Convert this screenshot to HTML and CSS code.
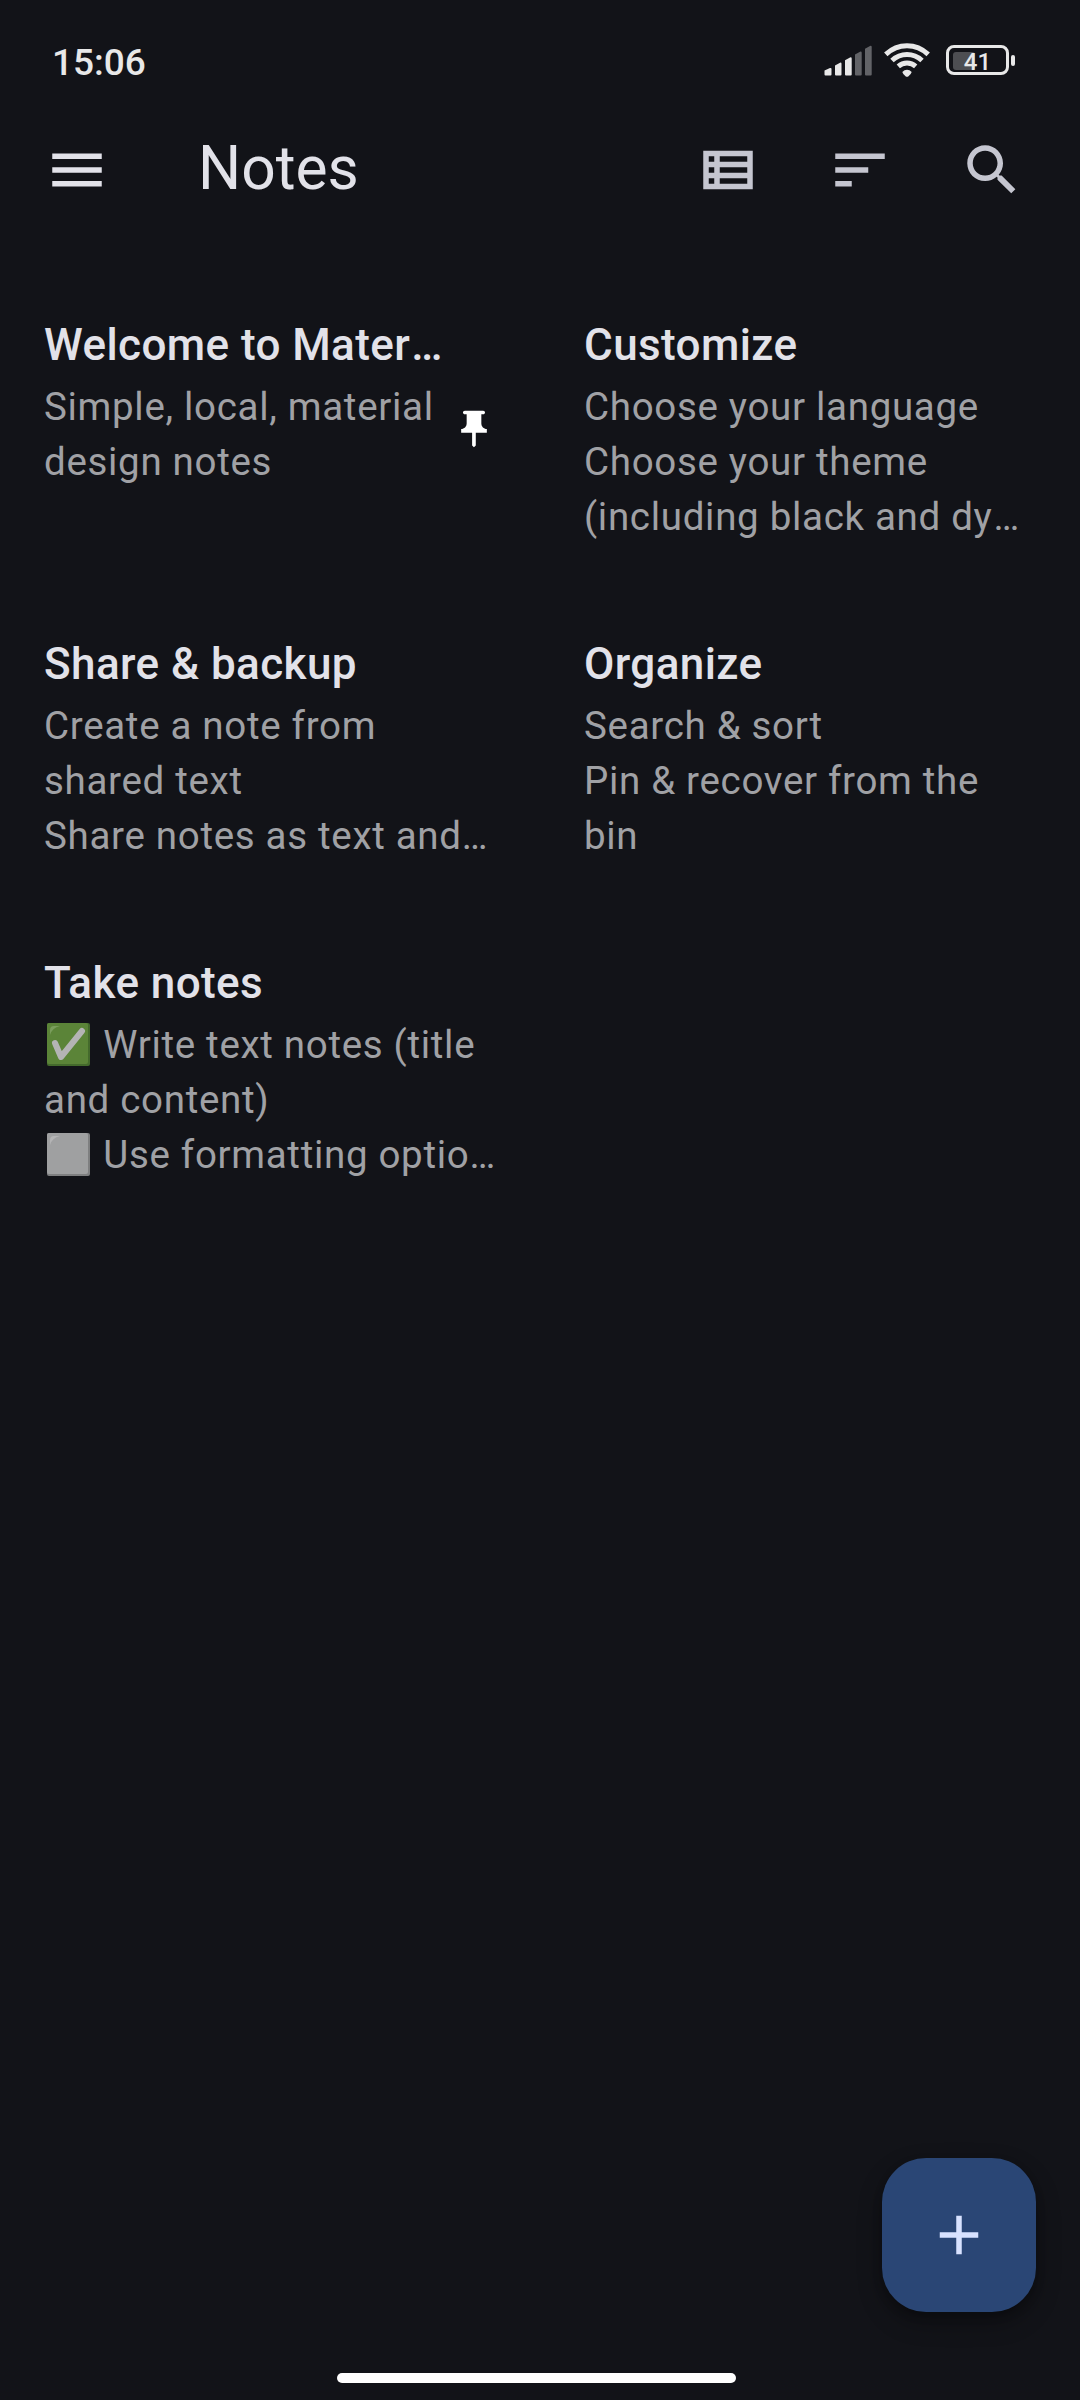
FILE: index.html
```html
<!DOCTYPE html>
<html lang="en">
<head>
<meta charset="utf-8">
<title>Notes</title>
<link rel="stylesheet" href="styles.css">
</head>
<body>
<div class="screen">
  <div class="status">
    <span class="clock">15:06</span>
    <div class="indicators">
      <svg class="signal" width="48" height="32" viewBox="0 0 48 32">
        <path class="lit" d="M.5 26.5 6 24q1.5-.5 1.500 1v5.500q0 1-1 1h-5q-1 0-1-1zM11 21.500l5-2.800q1.500-.5 1.500 1v10.800q0 1-1 1H12q-1 0-1-1zM21 16.200l5-2.800q1.700-.5 1.700 1v16.100q0 1-1 1H22q-1 0-1-1z"/>
        <path class="dim" d="M31 10.500l5-2.800q1.700-.5 1.700 1v21.800q0 1-1 1H32q-1 0-1-1zM41 4.700l5-2.800q1.700-.5 1.700 1v27.600q0 1-1 1H42q-1 0-1-1z"/>
      </svg>
      <svg class="wifi" width="46" height="34" viewBox="0 0 46 34">
        <path class="arc" d="M1.800 11.300Q11 2.700 23 2.700t21.200 8.600M8 17.500q6.500-6 15-6t15 6M14.300 23.300q3.700-3.200 8.700-3.200t8.700 3.200"/>
        <path class="lit" d="M18.300 29q2-2.300 4.700-2.300t4.700 2.300q-.5 2-3.200 4.200-1.500 1-3 0Q18.800 31 18.300 29z"/>
      </svg>
      <div class="battery"><div class="level"></div><span class="percent">41</span></div>
      <div class="terminal"></div>
    </div>
  </div>

  <header class="bar">
    <svg class="icon menu" viewBox="0 0 24 24"><path d="M3 18h18v-2H3v2zm0-5h18v-2H3v2zm0-7v2h18V6H3z"/></svg>
    <h1 class="heading">Notes</h1>
    <div class="actions">
      <svg class="icon" viewBox="0 0 24 24"><path d="M3 5v14h18V5H3zm4 2v2H5V7h2zm-2 6v-2h2v2H5zm0 2h2v2H5v-2zm14 2H9v-2h10v2zm0-4H9v-2h10v2zm0-4H9V7h10v2z"/></svg>
      <svg class="icon" viewBox="0 0 24 24"><path d="M3 18h6v-2H3v2zM3 6v2h18V6H3zm0 7h12v-2H3v2z"/></svg>
      <svg class="icon" viewBox="0 0 24 24"><path d="M15.500 14h-.79l-.28-.27C15.410 12.590 16 11.110 16 9.500 16 5.910 13.090 3 9.500 3S3 5.910 3 9.500 5.910 16 9.500 16c1.610 0 3.090-.59 4.230-1.570l.27.28v.79l5 4.990L20.490 19l-4.990-5zm-6 0C7.010 14 5 11.990 5 9.500S7.010 5 9.500 5 14 7.010 14 9.500 11.990 14 9.500 14z"/></svg>
    </div>
  </header>

  <main class="grid">
    <article class="note">
      <div class="text">
        <h2 class="title">Welcome to Mater<span class="more">…</span></h2>
        <p class="body">Simple, local, material<br>design notes</p>
      </div>
      <svg class="pin" viewBox="0 0 24 24"><path d="M16 9V4h1c.55 0 1-.45 1-1s-.45-1-1-1H7c-.55 0-1 .45-1 1s.45 1 1 1h1v5c0 1.660-1.340 3-3 3v2h5.970v7l1 1 1-1v-7H19v-2c-1.660 0-3-1.340-3-3z"/></svg>
    </article>
    <article class="note">
      <div class="text">
        <h2 class="title">Customize</h2>
        <p class="body">Choose your language<br>Choose your theme<br>(including black and dy<span class="more">…</span></p>
      </div>
    </article>
    <article class="note">
      <div class="text">
        <h2 class="title">Share &amp; backup</h2>
        <p class="body">Create a note from<br>shared text<br>Share notes as text and…</p>
      </div>
    </article>
    <article class="note">
      <div class="text">
        <h2 class="title">Organize</h2>
        <p class="body">Search &amp; sort<br>Pin &amp; recover from the<br>bin</p>
      </div>
    </article>
    <article class="note">
      <div class="text">
        <h2 class="title">Take notes</h2>
        <p class="body"><svg class="box" viewBox="0 0 43 43"><rect width="43" height="43" rx="2" fill="#446a2c"/><rect width="41" height="41" rx="2" fill="#5b8438"/><path d="M3 12V7q0-4 4-4h6Q5 5 3 12z" fill="#7a9d5c"/><path d="M8 20l6 14L35 8" fill="none" stroke="#b4b4b5" stroke-width="6" stroke-linecap="round" stroke-linejoin="round"/></svg> Write text notes (title<br>and content)<br><svg class="box" viewBox="0 0 43 43"><rect width="43" height="43" rx="2" fill="#7e7f80"/><rect width="41" height="41" rx="2" fill="#9fa0a1"/><path d="M3 12V7q0-4 4-4h6Q5 5 3 12z" fill="#b4b4b5"/></svg> Use formatting optio…</p>
      </div>
    </article>
  </main>

  <button class="fab" aria-label="Add note"><svg class="icon" viewBox="0 0 24 24"><path d="M19 13h-6v6h-2v-6H5v-2h6V5h2v6h6v2z"/></svg></button>
  <div class="gesture"></div>
</div>
</body>
</html>
```
FILE: styles.css
```css
* { box-sizing: border-box; }

body {
  margin: 0;
  background: #121318;
  color: #e2e2e9;
  font-family: Roboto, sans-serif;
}

.screen {
  position: relative;
  width: 1080px;
  height: 2400px;
  display: flex;
  flex-direction: column;
  align-items: stretch;
  overflow: hidden;
}

svg { display: block; }

.status {
  height: 104px;
  padding: 18px 65px 0 52px;
  display: flex;
  justify-content: space-between;
  align-items: flex-start;
}

.clock {
  margin-top: 23px;
  color: #e8e8e8;
  font-size: 37px;
  font-weight: 500;
  line-height: 44px;
}

.indicators {
  display: flex;
  align-items: center;
  height: 84px;
}

.lit { fill: #e8e8e8; }
.dim { fill: #626367; }
.arc { fill: none; stroke: #e8e8e8; stroke-width: 5; }

.signal { margin-right: 12px; }
.wifi { margin-right: 16px; }

.battery {
  width: 63px;
  height: 30px;
  padding: 3px;
  display: grid;
  align-items: center;
  border: 3px solid #e8e8e8;
  border-radius: 8px;
}

.level, .percent { grid-area: 1 / 1; }

.level {
  width: 22px;
  height: 18px;
  margin-left: 1px;
  border-radius: 3px;
  background: #4d4e52;
}

.percent {
  justify-self: center;
  padding-top: 2px;
  color: #e8e8e8;
  font-size: 24px;
  font-weight: 500;
  line-height: 18px;
}

.terminal {
  width: 4px;
  height: 11px;
  margin-left: 2px;
  border-radius: 2px;
  background: #e8e8e8;
}

.bar {
  height: 132px;
  padding: 0 55px 0 44px;
  display: flex;
  align-items: center;
}

.icon {
  width: 66px;
  height: 66px;
  fill: #c5c6d0;
}

.menu { fill: #e2e2e9; }

.heading {
  margin: 0 0 3px 88px;
  font-size: 60.5px;
  font-weight: 400;
  line-height: 77px;
}

.actions {
  margin-left: auto;
  display: flex;
  gap: 66px;
}

.grid {
  margin-top: 32px;
  display: grid;
  grid-template-columns: 540px 540px;
  grid-auto-rows: 319px;
}

.note {
  padding: 45px 44px 43px;
  display: flex;
  align-items: center;
  justify-content: space-between;
}

.text {
  height: 231px;
  white-space: nowrap;
}

.title {
  margin: 0;
  font-size: 44px;
  font-weight: 500;
  line-height: 65px;
  letter-spacing: 0.41px;
}

.body {
  margin: 1px 0 0;
  color: #a0a1a5;
  font-size: 38.5px;
  line-height: 55px;
  letter-spacing: 0.69px;
}

.more {
  display: inline-block;
  margin-left: 1px;
}

.pin {
  width: 44px;
  height: 44px;
  flex: none;
  fill: #fff;
}

.box {
  display: inline-block;
  width: 43px;
  height: 43px;
  margin: 0 3px 0 3px;
  vertical-align: -8px;
}

.fab {
  position: absolute;
  right: 44px;
  bottom: 88px;
  width: 154px;
  height: 154px;
  padding: 0;
  display: grid;
  place-items: center;
  border: 0;
  border-radius: 44px;
  background: #2a4675;
  box-shadow: 0 10px 24px rgba(0, 0, 0, 0.3), 0 4px 10px rgba(0, 0, 0, 0.2);
}

.fab .icon { fill: #d8e2ff; }

.gesture {
  width: 399px;
  height: 10px;
  margin: auto auto 17px 337px;
  border-radius: 5px;
  background: #fff;
}
```
